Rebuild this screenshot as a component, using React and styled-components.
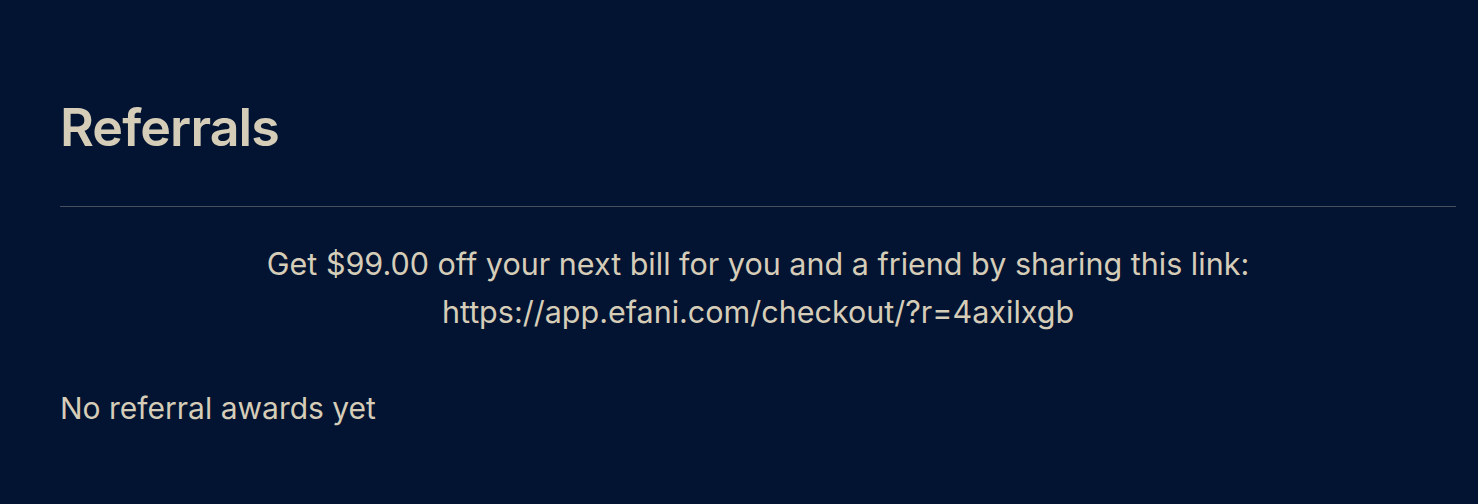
import styled, { createGlobalStyle } from "styled-components";

const Global = createGlobalStyle`
  html, body {
    margin: 0;
    padding: 0;
    background: #021431;
  }
  body {
    font-family: Inter, "Liberation Sans", sans-serif;
    color: #d6cdb9;
  }
`;

const Page = styled.div`
  min-height: 504px;
  padding: 80px 22px 0 60px;
  box-sizing: border-box;
`;

const Title = styled.h1`
  margin: 0;
  font-size: 52px;
  font-weight: 600;
  line-height: 96px;
  letter-spacing: -0.9px;
`;

const Divider = styled.hr`
  margin: 30px 0 0;
  border: 0;
  border-top: 1px solid #474e5d;
`;

const Share = styled.p`
  margin: 33px 0 0;
  text-align: center;
  font-size: 30.5px;
  line-height: 48px;
`;

const Empty = styled.p`
  margin: 48px 0 0;
  font-size: 30px;
  line-height: 48px;
`;

const App = () => {
  return (
    <Page>
      <Global />
      <Title>Referrals</Title>
      <Divider />
      <Share>
        Get $99.00 off your next bill for you and a friend by sharing this link:
        <br />
        https://app.efani.com/checkout/?r=4axilxgb
      </Share>
      <Empty>No referral awards yet</Empty>
    </Page>
  );
};

export default App;
